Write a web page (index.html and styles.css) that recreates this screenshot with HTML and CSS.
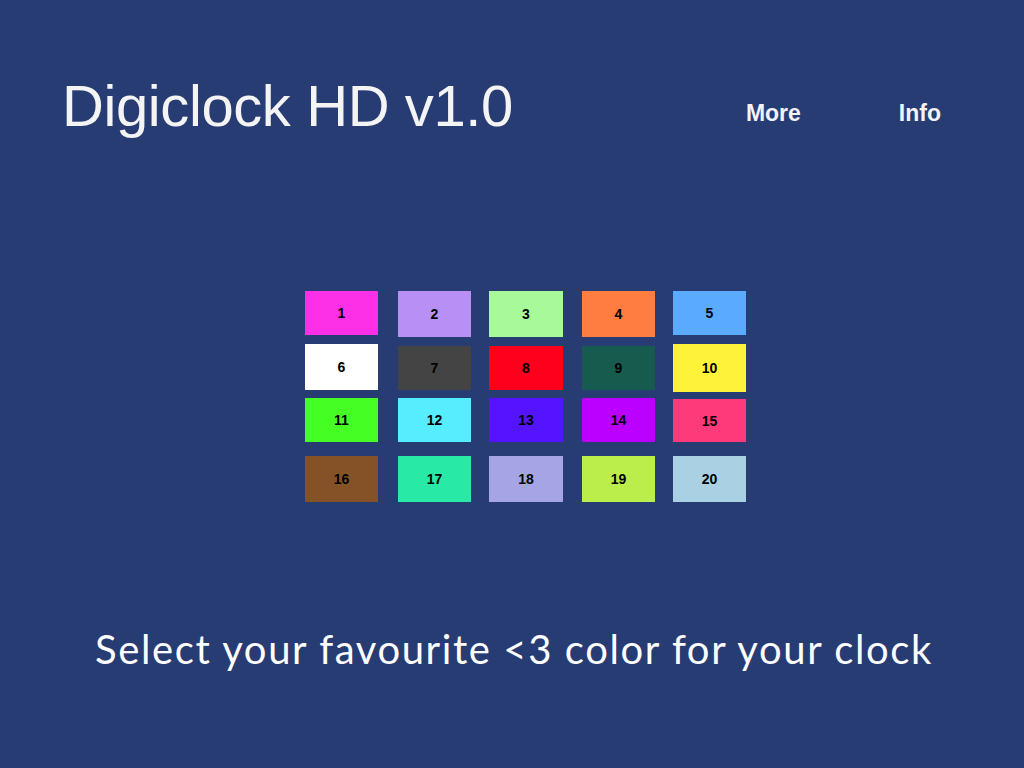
FILE: index.html
```html
<!DOCTYPE html>
<html>
<head>
<meta charset="utf-8">
<title>Digiclock HD v1.0</title>
<link rel="stylesheet" href="styles.css">
</head>
<body>
<div class="page">
  <header class="header">
    <h1 class="title">Digiclock HD v1.0</h1>
    <nav class="nav">
      <a class="nav-link" href="#">More</a>
      <a class="nav-link" href="#">Info</a>
    </nav>
  </header>
  <main class="grid">
    <div class="sw c1">1</div>
    <div class="sw c2 h46">2</div>
    <div class="sw c3 h46 wide">3</div>
    <div class="sw c4 h46">4</div>
    <div class="sw c5">5</div>

    <div class="sw c6 h46">6</div>
    <div class="sw c7 off2">7</div>
    <div class="sw c8 off2 wide">8</div>
    <div class="sw c9 off2">9</div>
    <div class="sw c10 h48">10</div>

    <div class="sw c11">11</div>
    <div class="sw c12">12</div>
    <div class="sw c13 wide">13</div>
    <div class="sw c14">14</div>
    <div class="sw c15 off1">15</div>

    <div class="sw c16 h46">16</div>
    <div class="sw c17 h46">17</div>
    <div class="sw c18 h46 wide">18</div>
    <div class="sw c19 h46">19</div>
    <div class="sw c20 h46">20</div>
  </main>
  <p class="prompt">Select your favourite &lt;3 color for your clock</p>
</div>
</body>
</html>
```
FILE: styles.css
```css
html, body {
  margin: 0;
  padding: 0;
}
body {
  background: #283c74;
  width: 1024px;
  height: 768px;
  overflow: hidden;
}
.page {
  display: flex;
  flex-direction: column;
}
.header {
  display: flex;
  align-items: flex-start;
  padding: 77px 83px 0 62px;
}
.title {
  margin: 0;
  font-family: "Liberation Sans", Arial, sans-serif;
  font-weight: normal;
  font-size: 58px;
  line-height: 58px;
  letter-spacing: -0.4px;
  color: #f4f4f4;
}
.nav {
  margin-left: auto;
  display: flex;
  gap: 98px;
  padding-top: 25px;
}
.nav-link {
  font-family: "Liberation Sans", Arial, sans-serif;
  font-weight: bold;
  font-size: 23px;
  line-height: 23px;
  color: #f2f2f8;
  text-decoration: none;
}
.grid {
  margin: 156px 0 0 305px;
  display: grid;
  grid-template-columns: 93px 91px 93px 91px 73px;
  grid-template-rows: 53px 54px 58px 46px;
  align-items: start;
}
.sw {
  width: 73px;
  height: 44px;
  display: flex;
  align-items: center;
  justify-content: center;
  font-family: "Liberation Sans", Arial, sans-serif;
  font-weight: bold;
  font-size: 14px;
  color: #000;
}
.wide { width: 74px; }
.h46 { height: 46px; }
.h48 { height: 48px; }
.off1 { margin-top: 1px; height: 43px; }
.off2 { margin-top: 2px; }

.c1 { background: #fd30e8; }
.c2 { background: #b88ff5; }
.c3 { background: #a8f99a; }
.c4 { background: #ff7d40; }
.c5 { background: #5aabff; }
.c6 { background: #ffffff; }
.c7 { background: #444444; }
.c8 { background: #ff001c; }
.c9 { background: #175a4e; }
.c10 { background: #fff33a; }
.c11 { background: #45ff24; }
.c12 { background: #55edff; }
.c13 { background: #5514ff; }
.c14 { background: #bc00ff; }
.c15 { background: #ff3a7a; }
.c16 { background: #845226; }
.c17 { background: #28eaa6; }
.c18 { background: #a5a4e4; }
.c19 { background: #bbed4b; }
.c20 { background: #a9d1e3; }

.prompt {
  margin: 127px 0 0 0;
  padding-left: 4px;
  text-align: center;
  font-family: Lato, "Open Sans", sans-serif;
  font-size: 40px;
  line-height: 40px;
  letter-spacing: 1.6px;
  color: #ffffff;
}
```
